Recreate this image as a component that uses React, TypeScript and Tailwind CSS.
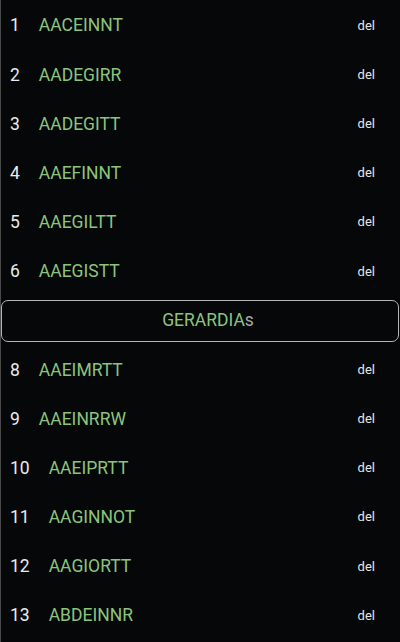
import React from "react";

const rows: (string | null)[] = [
  "AACEINNT",
  "AADEGIRR",
  "AADEGITT",
  "AAEFINNT",
  "AAEGILTT",
  "AAEGISTT",
  null,
  "AAEIMRTT",
  "AAEINRRW",
  "AAEIPRTT",
  "AAGINNOT",
  "AAGIORTT",
  "ABDEINNR",
];

export default function App() {
  return (
    <div
      className="w-[400px] h-[642px] overflow-hidden bg-[#050709] border-l border-[#4a4a4a] pt-[1px]"
      style={{ fontFamily: "Roboto, 'Liberation Sans', sans-serif" }}
    >
      {rows.map((w, i) =>
        w === null ? (
          <div key={i} className="h-[49.17px] flex items-center">
            <div className="w-[398px] h-[42px] border border-[#b5b5b5] rounded-[7px] flex items-center justify-center pl-[16px] text-[17.5px]">
              <span className="text-[#8cc47e]">GERARDIA</span>
              <span className="text-[#a8a8a8]">s</span>
            </div>
          </div>
        ) : (
          <div key={i} className="h-[49.17px] flex items-center pl-[9px] pr-[25px]">
            <span className="text-[17.5px] text-[#ececec]">{i + 1}</span>
            <span className="ml-[19px] text-[17.5px] text-[#8cc47e]">{w}</span>
            <span className="ml-auto text-[13px] text-[#e6e6e6]">del</span>
          </div>
        )
      )}
    </div>
  );
}
